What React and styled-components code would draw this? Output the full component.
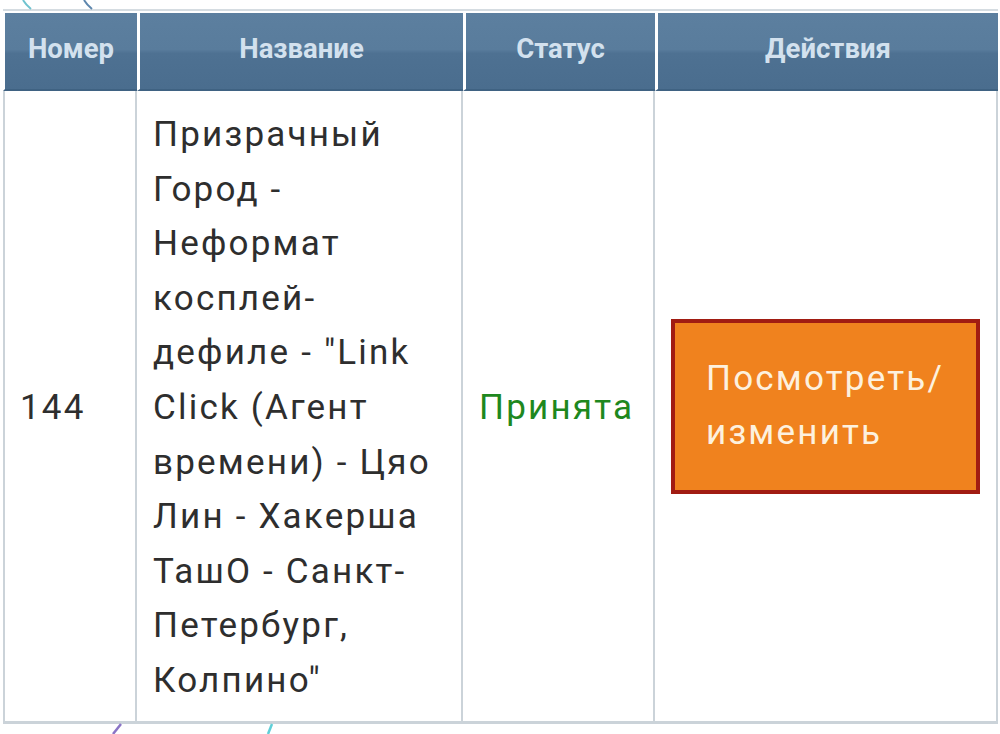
import React from "react";
import styled, { createGlobalStyle } from "styled-components";

const GlobalStyle = createGlobalStyle`
  html, body {
    margin: 0;
    padding: 0;
    background: #fff;
  }
  body {
    font-family: Roboto, "Noto Sans", "Liberation Sans", sans-serif;
    width: 1000px;
    height: 734px;
    overflow: hidden;
    position: relative;
  }
`;

const Page = styled.div`
  padding: 9px 0 0 3px;
`;

const Decor = styled.svg`
  position: absolute;
  left: 0;
  top: 0;
  width: 1000px;
  height: 734px;
  pointer-events: none;
`;

const Table = styled.table`
  border-collapse: separate;
  border-spacing: 0;
  table-layout: fixed;
  width: 995px;
  border-top: 2px solid #d5dce1;
  background: #fff;
`;

const Head = styled.th`
  box-sizing: border-box;
  width: ${(p) => p.$w}px;
  height: 80px;
  padding: 0 0 6px;
  border-top: 2px solid #fff;
  border-left: ${(p) => (p.$first ? 2 : 3)}px solid #fff;
  border-bottom: 2px solid #3f6282;
  background: linear-gradient(
    to bottom,
    #5c7f9f 0%,
    #597c9c 48%,
    #4e7192 53%,
    #4a6d8e 100%
  );
  color: #d3e1ee;
  font-size: 27.5px;
  font-weight: 700;
  text-align: center;
  vertical-align: middle;
`;

const Cell = styled.td`
  padding: 17px ${(p) => p.$px || 16}px 12px;
  border-right: 2px solid #cbd3d9;
  border-left: ${(p) => (p.$first ? "2px solid #cbd3d9" : "none")};
  border-bottom: 3px solid #cbd3d9;
  vertical-align: middle;
  text-align: left;
  color: ${(p) => p.$color || "#2e2e2e"};
  font-size: 35px;
  letter-spacing: 2.2px;
  line-height: 54.6px;
  word-wrap: break-word;
`;

const ActionButton = styled.button`
  display: block;
  width: 100%;
  box-sizing: border-box;
  margin-top: -4px;
  padding: 29px 16px 29px 31px;
  background: #f0821e;
  border: 4px solid #a11c12;
  color: #fdf1de;
  font-family: inherit;
  font-size: 35px;
  letter-spacing: 2.2px;
  line-height: 54.6px;
  text-align: left;
  cursor: pointer;
`;

const columns = [
  { title: "Номер", w: 134 },
  { title: "Название", w: 326 },
  { title: "Статус", w: 192 },
  { title: "Действия", w: 343 },
];

const row = {
  id: 144,
  name: 'Призрачный Город - Неформат косплей-дефиле - "Link Click (Агент времени) - Цяо Лин - Хакерша ТашО - Санкт-Петербург, Колпино"',
  status: "Принята",
};

export default function App() {
  return (
    <>
      <GlobalStyle />
      <Page>
        <Table>
          <thead>
            <tr>
              {columns.map((c, i) => (
                <Head key={c.title} $w={c.w} $first={i === 0}>
                  {c.title}
                </Head>
              ))}
            </tr>
          </thead>
          <tbody>
            <tr>
              <Cell $first $px={15}>{row.id}</Cell>
              <Cell $px={16}>{row.name}</Cell>
              <Cell $px={16} $color="#1e881e">
                {row.status}
              </Cell>
              <Cell $px={16}>
                <ActionButton type="button">Посмотреть/ изменить</ActionButton>
              </Cell>
            </tr>
          </tbody>
        </Table>
      </Page>
      <Decor viewBox="0 0 1000 734">
        <path d="M23 0 Q26 5 31 9" stroke="#6fc3cf" strokeWidth="2" fill="none" />
        <path d="M84 0 Q87 5 92 9" stroke="#5d86ad" strokeWidth="2" fill="none" />
        <path d="M121 724 L113 734" stroke="#8a74c6" strokeWidth="2.5" fill="none" />
        <path d="M272 724 L268 734" stroke="#5fcfd8" strokeWidth="2.5" fill="none" />
      </Decor>
    </>
  );
}
